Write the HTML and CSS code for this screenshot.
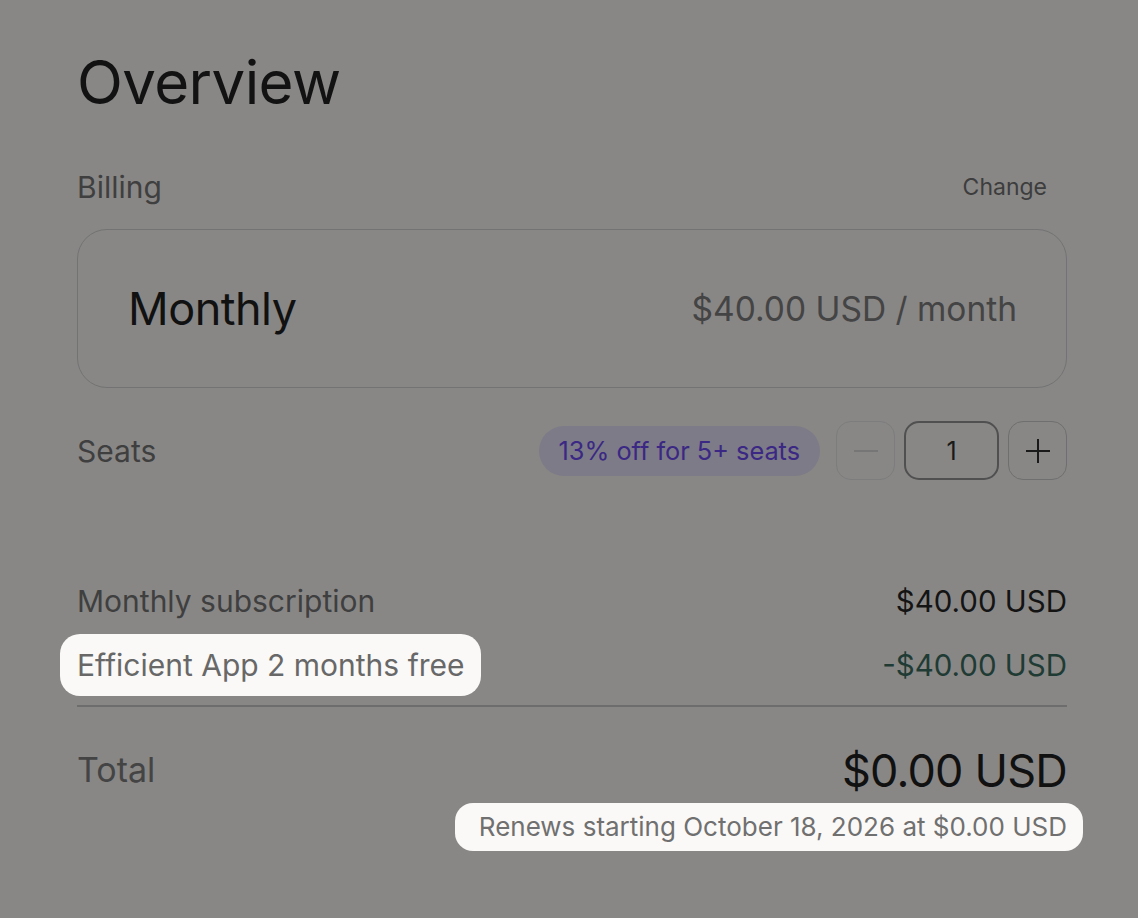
FILE: index.html
```html
<!DOCTYPE html>
<html lang="en">
<head>
<meta charset="utf-8">
<title>Overview</title>
<link rel="stylesheet" href="styles.css">
</head>
<body>
<main class="page">
  <h1 class="title">Overview</h1>

  <div class="row billing-head">
    <span class="label">Billing</span>
    <span class="change">Change</span>
  </div>

  <div class="plan">
    <span class="plan-name">Monthly</span>
    <span class="plan-price">$40.00 USD / month</span>
  </div>

  <div class="row seats">
    <span class="label">Seats</span>
    <div class="seat-controls">
      <span class="badge">13% off for 5+ seats</span>
      <button class="step step-minus" aria-label="Decrease">
        <svg width="26" height="26" viewBox="0 0 26 26"><path d="M1 13h24" stroke="currentColor" stroke-width="2" fill="none"/></svg>
      </button>
      <div class="count">1</div>
      <button class="step step-plus" aria-label="Increase">
        <svg width="26" height="26" viewBox="0 0 26 26"><path d="M1 13h24M13 1v24" stroke="currentColor" stroke-width="2" fill="none"/></svg>
      </button>
    </div>
  </div>

  <div class="lines">
    <div class="row line">
      <span class="label">Monthly subscription</span>
      <span class="amount">$40.00 USD</span>
    </div>
    <div class="row line">
      <span class="label spot">Efficient App 2 months free</span>
      <span class="amount discount">-$40.00 USD</span>
    </div>
  </div>

  <div class="total-block">
    <div class="row total">
      <span class="label total-label">Total</span>
      <span class="total-amount">$0.00 USD</span>
    </div>
    <div class="renew-row">
      <span class="renew spot">Renews starting October 18, 2026 at $0.00 USD</span>
    </div>
  </div>
</main>
</body>
</html>
```

FILE: styles.css
```css
* { box-sizing: border-box; }

html, body {
  margin: 0;
  padding: 0;
  background: #888786;
}

body {
  font-family: Inter, "Noto Sans", "Liberation Sans", sans-serif;
  color: #111;
}

.page {
  width: 1138px;
  height: 918px;
  padding: 45px 71px 0 77px;
}

.title {
  margin: 0;
  font-size: 60px;
  font-weight: 400;
  line-height: 74px;
  letter-spacing: -0.6px;
  color: #121212;
}

.row {
  display: flex;
  justify-content: space-between;
  align-items: center;
}

.label {
  font-size: 30px;
  color: #3f3f3f;
  line-height: 36px;
}

.billing-head {
  margin-top: 50px;
  height: 36px;
}

.change {
  font-size: 23px;
  color: #3d3d3d;
  margin-right: 20px;
}

.plan {
  margin-top: 24px;
  height: 159px;
  border: 1.5px solid #737373;
  border-radius: 30px;
  display: flex;
  align-items: center;
  justify-content: space-between;
  padding: 0 49px 0 50px;
}

.plan-name {
  font-size: 45px;
  color: #111;
  letter-spacing: -0.5px;
}

.plan-price {
  font-size: 33.5px;
  color: #444;
}

.seats {
  margin-top: 33px;
  height: 59px;
}

.seat-controls {
  display: flex;
  align-items: center;
  gap: 9px;
}

.badge {
  background: #7d7b87;
  color: #3a2884;
  font-size: 25.3px;
  height: 50px;
  line-height: 50px;
  padding: 0 20px;
  border-radius: 25px;
  margin-right: 7px;
}

.step {
  width: 59px;
  height: 59px;
  border-radius: 15px;
  background: transparent;
  display: flex;
  align-items: center;
  justify-content: center;
  padding: 0;
  font: inherit;
}

.step-minus {
  border: 1.5px solid #7d7d7d;
  color: #767676;
}

.step-plus {
  border: 1.5px solid #6f6f6f;
  color: #1a1a1a;
}

.count {
  width: 95px;
  height: 59px;
  border: 2px solid #505050;
  border-radius: 15px;
  display: flex;
  align-items: center;
  justify-content: center;
  font-size: 25px;
  color: #1a1a1a;
}

.lines {
  margin-top: 90px;
  padding-bottom: 7px;
  border-bottom: 2px solid #6d6d6d;
}

.line {
  height: 62px;
  margin-bottom: 2px;
}

.amount {
  font-size: 29.5px;
  color: #141414;
}

.discount {
  color: #1f3b34;
}

.spot {
  background: #faf9f7;
  border-radius: 20px;
}

.line .spot {
  color: #686868;
  margin-left: -17px;
  padding: 0 16px 0 17px;
  height: 62px;
  line-height: 62px;
}

.total-block {
  margin-top: 36px;
}

.total {
  height: 54px;
}

.total-label {
  font-size: 34px;
  color: #444;
}

.total-amount {
  font-size: 45px;
  color: #111;
  letter-spacing: -0.8px;
}

.renew-row {
  display: flex;
  justify-content: flex-end;
  margin-top: 6px;
  margin-right: -16px;
}

.renew {
  font-size: 26px;
  color: #707070;
  height: 48px;
  line-height: 48px;
  padding: 0 16px 0 24px;
  border-radius: 18px;
}
```
